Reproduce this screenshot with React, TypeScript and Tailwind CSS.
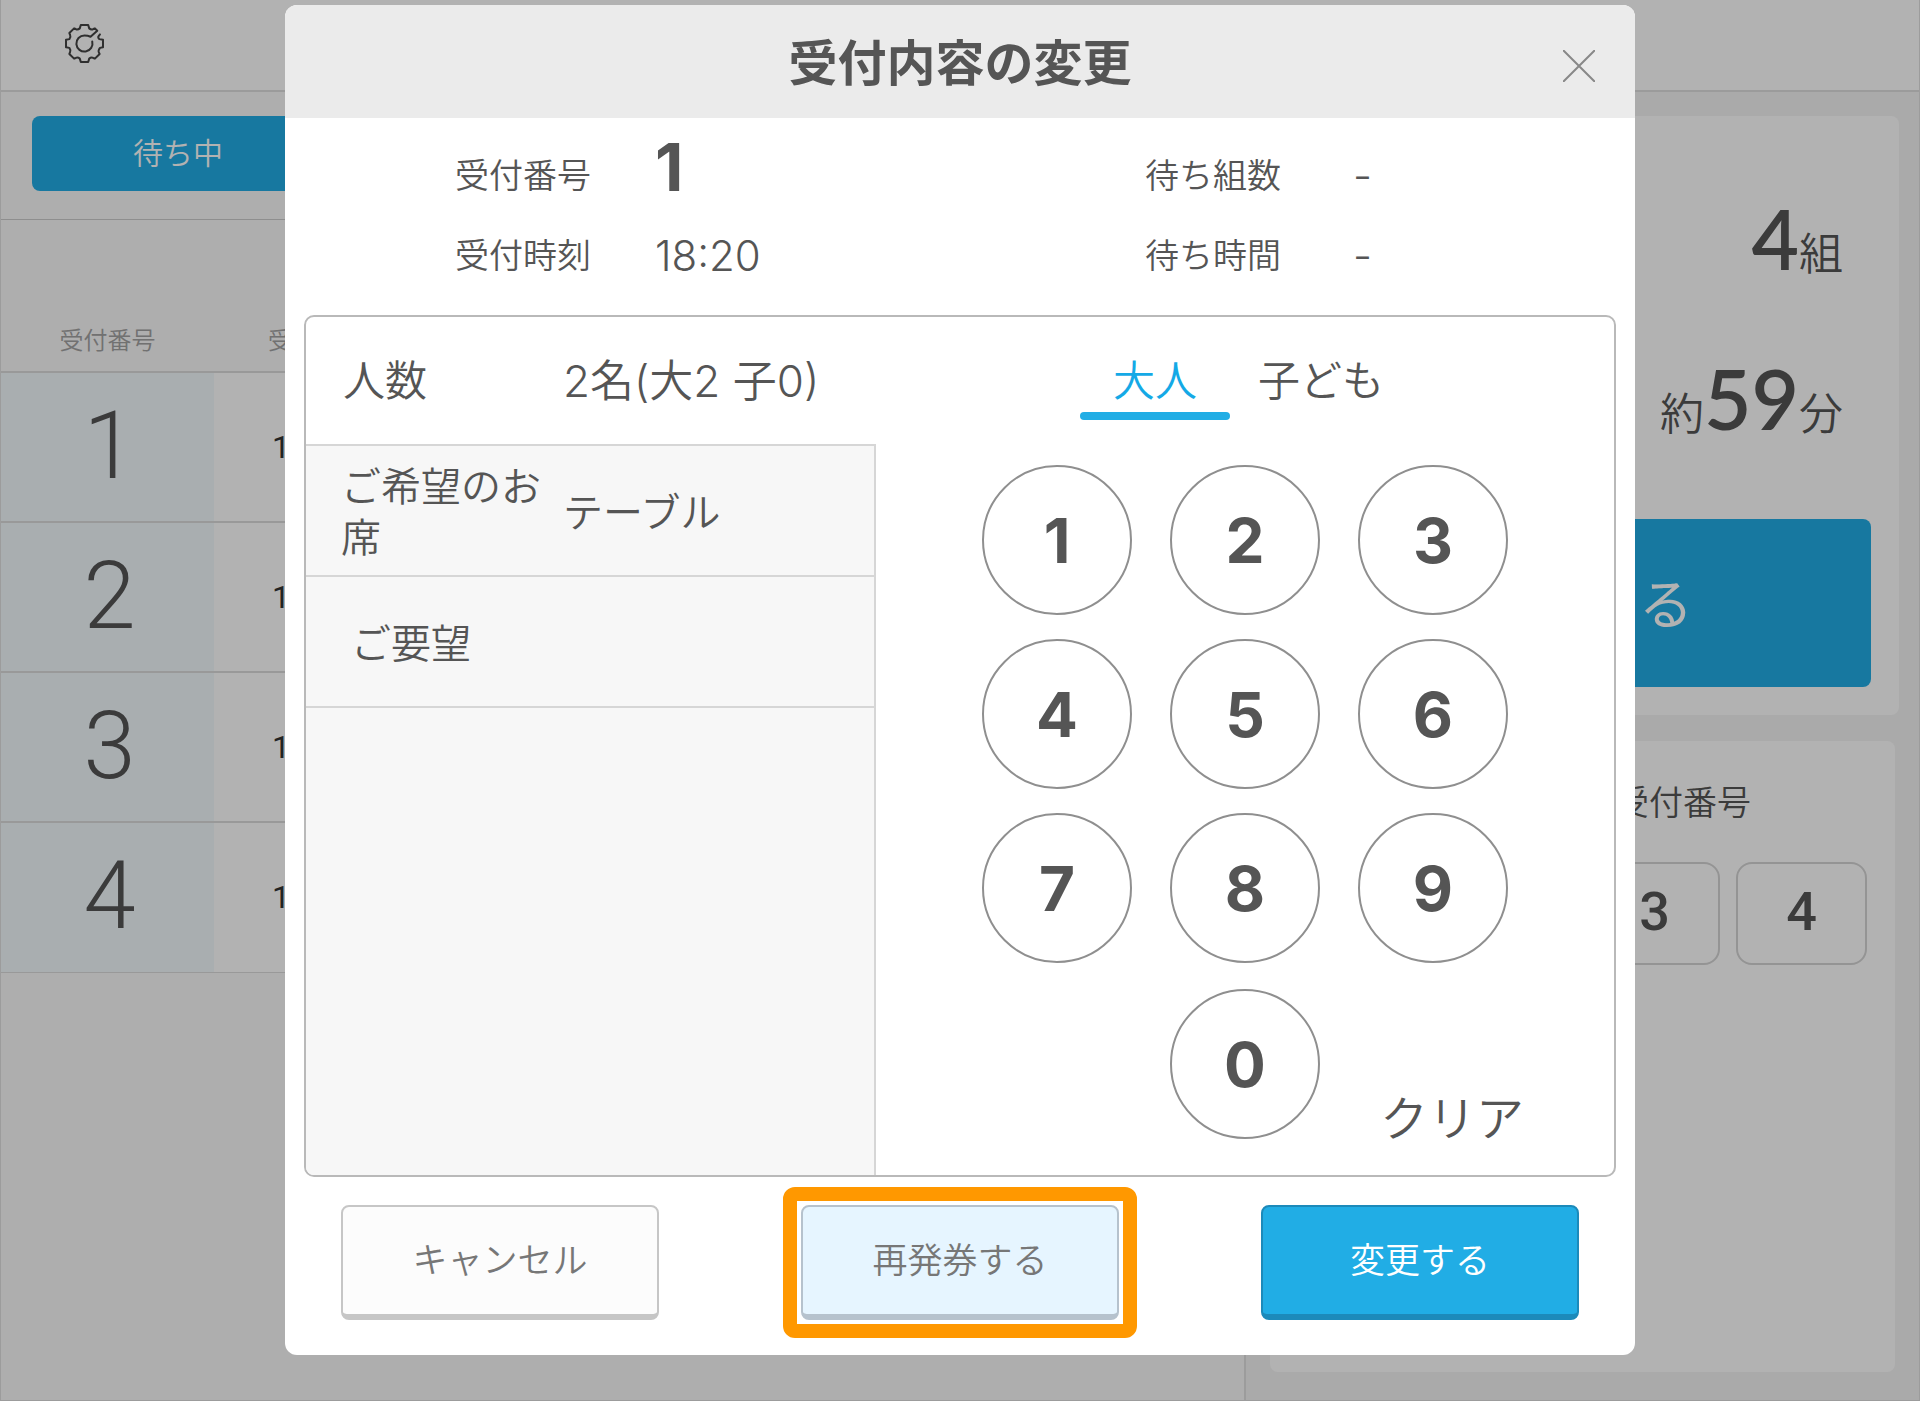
import React, { useState } from 'react';
import clsx from 'clsx';

const waiting = ['1', '2', '3', '4'];
const calls = ['3', '4'];
const keys = ['1', '2', '3', '4', '5', '6', '7', '8', '9'];

const GearIcon = () => (
  <svg viewBox="0 0 116 116" className="h-[39px] w-[39px]" fill="none" stroke="currentColor" strokeWidth="6" strokeLinejoin="round" strokeLinecap="round">
    <path d="M104 31 L100 36 Q97 40 102 45 L113 47 V69 L104 71 Q98 79 101 85 L103 89 L89 103 L84 101 Q78 98 72 103 L69 113 H47 L44 103 Q38 98 32 101 L27 103 L13 89 L15 84 Q18 78 13 71 L3 69 V47 L13 45 Q18 38 15 32 L13 27 L27 13 L32 15 Q38 18 44 13 L47 3 H69 L72 13 Q78 18 84 15 L89 13 L96 20 L76 38 Q68 34 58 34 A24 24 0 1 0 81 52" />
  </svg>
);

const Background = () => (
  <div className="flex min-h-screen flex-col border border-t-0 border-[#e0e0e0] bg-[#f9f9f9]">
    <header className="flex h-[92px] items-center border-b-2 border-[#dedede] bg-white px-16 pb-[3px]">
      <button aria-label="設定" className="text-[#444]">
        <GearIcon />
      </button>
    </header>
    <div className="flex flex-1">
      <section className="flex-1">
        <div className="h-32 border-b border-[#ccc] px-[31px] pt-6">
          <button className="h-[75px] w-[292px] rounded-lg bg-[#21ade5] text-[30px] font-[350] text-white">待ち中</button>
        </div>
        <table className="w-full table-fixed border-b border-[#dcdcdc]">
          <thead>
            <tr className="h-[152px] text-left align-bottom text-2xl text-[#a2a2a2]">
              <th className="w-[213px] pb-3.5 text-center font-[350]">受付番号</th>
              <th className="pb-3.5 pl-[54px] font-[350]">受</th>
            </tr>
          </thead>
          <tbody>
            {waiting.map((no) => (
              <tr key={no} className="h-[150px] border-t-2 border-[#dcdcdc] bg-white text-[#555]">
                <td className="bg-[#f2f9fd] pb-0.5 pl-1 text-center font-['Roboto'] text-[94px] leading-[100px] font-light">{no}</td>
                <td className="pl-[58px] font-['Roboto'] text-[32px] text-[#333]">1</td>
              </tr>
            ))}
          </tbody>
        </table>
      </section>
      <aside className="flex w-[675px] flex-col gap-[26px] border-l-2 border-[#e0e0e0] bg-[#f4f4f4] pt-6 pr-5 pb-7 pl-6 text-[#555]">
        <div className="flex h-[599px] flex-col rounded-lg bg-white px-7 pt-[57px] pb-7">
          <p className="flex h-[160px] items-baseline justify-end pr-7 text-[44px] font-[350]">
            <span className="font-['Lato'] text-[82px] leading-[130px] font-semibold">4</span>組
          </p>
          <p className="flex flex-1 items-baseline justify-end pr-7 text-[44px] font-[350]">
            約<span className="font-['Lato'] text-[82px] leading-[130px] font-semibold">59</span>分
          </p>
          <button className="h-[168px] rounded-lg bg-[#21ade5] pt-1 pr-[178px] text-right text-[54px] text-white">る</button>
        </div>
        <div className="mr-1 flex-1 rounded-lg bg-white px-7">
          <h2 className="pt-9 pr-[116px] text-right text-[34px] leading-[51px] font-[350]">受付番号</h2>
          <div className="mt-[34px] flex justify-end gap-4">
            {calls.map((no) => (
              <button key={no} className="h-[103px] w-[131px] rounded-2xl border-2 border-[#d5d5d5] pb-1 font-['Roboto'] text-[54px] font-medium">
                {no}
              </button>
            ))}
          </div>
        </div>
      </aside>
    </div>
  </div>
);

interface InfoProps {
  label: string;
  children: React.ReactNode;
}

const Info = ({ label, children }: InfoProps) => (
  <div className="flex h-20 items-center">
    <dt className="w-[200px] text-[34px]">{label}</dt>
    <dd>{children}</dd>
  </div>
);

interface KeyProps {
  label: string;
  onPress: (label: string) => void;
}

const Key = ({ label, onPress }: KeyProps) => (
  <button
    onClick={() => onPress(label)}
    className="h-[150px] w-[150px] rounded-full border-2 border-[#8f8f8f] text-[62px] font-bold"
  >
    {label}
  </button>
);

const App = () => {
  const [tab, setTab] = useState<'adult' | 'child'>('adult');
  const [adults, setAdults] = useState('2');
  const [children, setChildren] = useState('0');

  const setCount = tab === 'adult' ? setAdults : setChildren;
  const total = Number(adults) + Number(children);

  return (
    <div className="relative font-['Inter','Noto_Sans_CJK_JP',sans-serif]">
      <Background />
      <div className="absolute inset-0 flex items-start justify-center bg-black/30 pt-[5px]">
        <div role="dialog" aria-labelledby="dialog-title" className="w-full max-w-[1350px] overflow-hidden rounded-xl bg-white font-[350] text-[#555]">
          <div className="grid h-[113px] grid-cols-[1fr_auto_1fr] items-center bg-[#ebebeb] px-10">
            <h1 id="dialog-title" className="col-start-2 pt-1 text-[49px] font-bold">
              受付内容の変更
            </h1>
            <button aria-label="閉じる" className="justify-self-end pt-2 text-[#888]">
              <svg viewBox="0 0 32 32" className="h-8 w-8" stroke="currentColor" strokeWidth="2">
                <path d="M0 0 32 32M32 0 0 32" />
              </svg>
            </button>
          </div>

          <dl className="grid grid-cols-[690px_1fr] pt-[17px] pb-5 pl-[170px]">
            <Info label="受付番号">
              <span className="block pb-4 text-[66px] leading-[64px] font-bold">1</span>
            </Info>
            <Info label="待ち組数">
              <span className="pl-2 text-[42px]">-</span>
            </Info>
            <Info label="受付時刻">
              <span className="text-[42px]">18:20</span>
            </Info>
            <Info label="待ち時間">
              <span className="pl-2 text-[42px]">-</span>
            </Info>
          </dl>

          <div className="mx-[19px] grid grid-cols-[570px_1fr] overflow-hidden rounded-[10px] border-2 border-[#b9b9b9]">
            <div className="flex flex-col">
              <button className="flex h-[127px] items-center pl-[37px] text-left text-[42px]">
                <span className="w-[220px]">人数</span>
                <span className="text-[44px]">
                  {total}名(大{adults} 子{children})
                </span>
              </button>
              <div className="flex-1 border-t-2 border-r-2 border-[#d6d6d6] bg-[#f7f7f7] text-[40px] leading-[51px]">
                <button className="flex h-[131px] w-full items-center border-b-2 border-[#d6d6d6] pt-[3px] pl-[35px] text-left">
                  <span className="w-[222px] pr-4">ご希望のお席</span>
                  <span>テーブル</span>
                </button>
                <button className="flex h-[131px] w-full items-center border-b-2 border-[#d6d6d6] pt-[3px] pl-[45px] text-left">
                  <span>ご要望</span>
                </button>
              </div>
            </div>

            <div className="flex flex-col items-center pt-8 pb-9">
              <div role="tablist" className="flex gap-4 pr-[14px] text-[42px] leading-[63px]">
                <button
                  role="tab"
                  aria-selected={tab === 'adult'}
                  onClick={() => setTab('adult')}
                  className={clsx('w-[150px]', tab === 'adult' && 'text-[#14a9e6]')}
                >
                  大人
                  <span className={clsx('block h-2 rounded-full', tab === 'adult' && 'bg-[#21ade5]')} />
                </button>
                <button
                  role="tab"
                  aria-selected={tab === 'child'}
                  onClick={() => setTab('child')}
                  className={clsx('w-[150px]', tab === 'child' && 'text-[#14a9e6]')}
                >
                  子ども
                  <span className={clsx('block h-2 rounded-full', tab === 'child' && 'bg-[#21ade5]')} />
                </button>
              </div>
              <div className="mt-[45px] grid grid-cols-[150px_150px_150px] gap-x-[38px] gap-y-6">
                {keys.map((key) => (
                  <Key key={key} label={key} onPress={setCount} />
                ))}
                <div className="col-start-2 pt-0.5">
                  <Key label="0" onPress={setCount} />
                </div>
                <button onClick={() => setCount('0')} className="self-end pl-[22px] text-left text-5xl leading-[40px] whitespace-nowrap">
                  クリア
                </button>
              </div>
            </div>
          </div>

          <div className="flex items-center justify-between px-14 pt-[10px] pb-[17px] text-[35px]">
            <button className="h-[115px] w-[318px] rounded-lg border-2 border-b-[6px] border-[#c6c6c6] bg-[#fcfcfc] text-[#777]">
              キャンセル
            </button>
            <div className="rounded-xl border-14 border-[#ff9800] p-1">
              <button className="h-[115px] w-[318px] rounded-lg border-2 border-b-[6px] border-[#b6c2cd] bg-[#e6f5ff] text-[#777]">
                再発券する
              </button>
            </div>
            <button className="h-[115px] w-[318px] rounded-lg border-2 border-b-[6px] border-[#1c8aba] bg-[#21ade5] text-white">
              変更する
            </button>
          </div>
        </div>
      </div>
    </div>
  );
};

export default App;
